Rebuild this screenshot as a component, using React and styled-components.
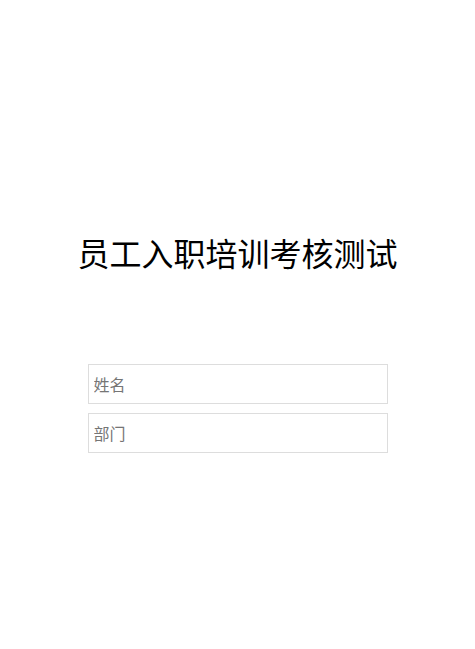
import React from "react";
import styled, { createGlobalStyle } from "styled-components";

const GlobalStyle = createGlobalStyle`
  body {
    margin: 0;
    background: #ffffff;
    font-family: "Noto Sans CJK SC", "Noto Sans", sans-serif;
  }
`;

const App = () => {
  return (
    <Page>
      <GlobalStyle />
      <Title>员工入职培训考核测试</Title>
      <Form>
        <FormInput type="text" placeholder="姓名" />
        <FormInput type="text" placeholder="部门" />
      </Form>
    </Page>
  );
};

const Page = styled.div`
  display: flex;
  flex-direction: column;
  align-items: center;
  padding-top: 228px;
  min-height: 100vh;
  box-sizing: border-box;
`;

const Title = styled.h1`
  margin: 0;
  font-size: 32px;
  font-weight: normal;
  line-height: 48px;
  color: #000000;
`;

const Form = styled.div`
  display: flex;
  flex-direction: column;
  gap: 9px;
  margin-top: 88px;
`;

const FormInput = styled.input`
  width: 300px;
  height: 40px;
  box-sizing: border-box;
  border: 1px solid #dddddd;
  padding: 0 5px;
  font-size: 16px;
  font-family: "Noto Sans CJK SC", "Noto Sans", sans-serif;
  outline: none;

  &::placeholder {
    color: #757575;
  }
`;

export default App;
